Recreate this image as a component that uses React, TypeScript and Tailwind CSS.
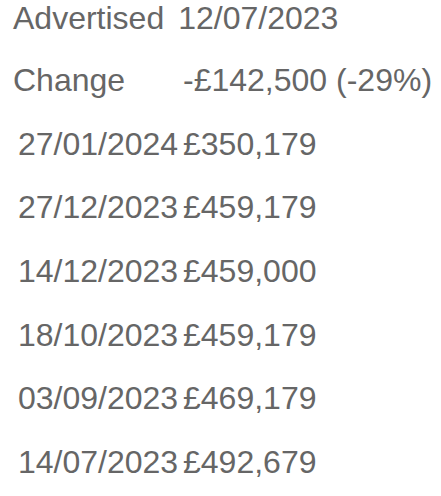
import React from "react";

const rows: [string, string][] = [
  ["27/01/2024", "£350,179"],
  ["27/12/2023", "£459,179"],
  ["14/12/2023", "£459,000"],
  ["18/10/2023", "£459,179"],
  ["03/09/2023", "£469,179"],
  ["14/07/2023", "£492,679"],
];

export default function App() {
  return (
    <div
      className="w-[441px] h-[496px] bg-white text-[#666666] text-[32px] leading-[32px] pt-[2px]"
      style={{ fontFamily: '"Liberation Sans", Arial, sans-serif' }}
    >
      <div className="flex pl-[13px] whitespace-nowrap">
        <span>Advertised</span>
        <span className="ml-[14px]">12/07/2023</span>
      </div>
      <div className="flex flex-col gap-[31.7px] mt-[30px]">
        <div className="flex pl-[13px] whitespace-nowrap">
          <div className="w-[170px]">Change</div>
          <div>-£142,500 (-29%)</div>
        </div>
        {rows.map(([d, v]) => (
          <div key={d} className="flex pl-[18px] whitespace-nowrap">
            <div className="w-[165px]">{d}</div>
            <div>{v}</div>
          </div>
        ))}
      </div>
    </div>
  );
}
